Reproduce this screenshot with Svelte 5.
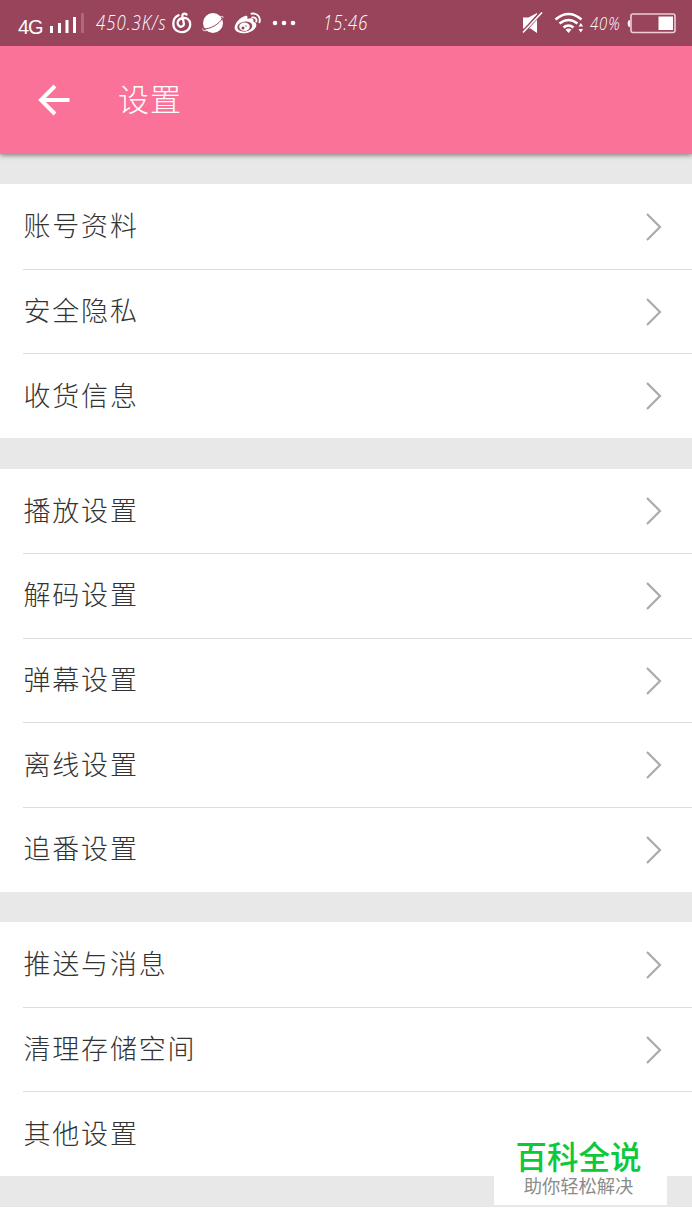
<script>
  const groups = [
    ['账号资料', '安全隐私', '收货信息'],
    ['播放设置', '解码设置', '弹幕设置', '离线设置', '追番设置'],
    ['推送与消息', '清理存储空间', '其他设置']
  ];
</script>

<div class="screen">
  <div class="status">
    <span class="net">4G</span>
    <svg class="signal" width="35" height="24" viewBox="0 0 35 24" fill="#fff">
      <path d="M1 15h3v7H1zM9 12h3v10H9zM16.500 9h3v13h-3zM24 6h3v16h-3z" />
      <path d="M32 2h3v20h-3z" opacity=".2" />
    </svg>
    <span class="hand speed">450.3K/s</span>
    <svg class="music" width="20" height="22" viewBox="0 0 20 22" fill="none" stroke="#fff" stroke-width="2.300" stroke-linecap="round">
      <path d="M6.500 3.300C-.5 6.500-.3 17 6.500 19.500c5.500 2.200 11.500-1.300 11.700-7 .2-5-4-7-7.500-6.500-4.800.7-6 5-4.300 7.300 2 2.700 6 1.200 5.400-2L10.400 4.500c-.5-3 2.200-3.500 4.100-2" />
    </svg>
    <svg class="planet" width="22" height="22" viewBox="0 0 22 22">
      <circle cx="11" cy="11" r="10" fill="#fff" />
      <path d="M1.500 16.800C8 17.500 17.500 12 20.500 6" fill="none" stroke="#98445b" stroke-width="1" />
      <path d="M.8 16.500C.3 19 2.500 19 5 18.500M18 5c2.500-1.200 3.500-.5 3 1" fill="none" stroke="#fff" stroke-width=".8" />
    </svg>
    <svg class="weibo" width="28" height="23" viewBox="0 0 28 23">
      <path d="M11 4c2-.8 3 .5 2.300 3 4-1.700 7-.7 6 2.500 3 1 3.800 3.300 2.300 6C18 22 4 23.500 1 17.500-1 13 5.500 5.500 11 4Z" fill="#fff" />
      <ellipse cx="10.800" cy="14.600" rx="7.500" ry="5" transform="rotate(-8 10.800 14.600)" fill="#98445b" />
      <ellipse cx="10.500" cy="14.800" rx="5.300" ry="4.200" fill="#fff" />
      <circle cx="9" cy="16" r="1.500" fill="#98445b" /><circle cx="12" cy="14" r=".7" fill="#98445b" />
      <path d="M17.500 1.800c5.500-1.200 9.500 3 8 8.500M18.300 5.500c3-.5 4.700 1.500 4 4" fill="none" stroke="#fff" stroke-width="1.900" stroke-linecap="round" />
    </svg>
    <svg class="dots" width="24" height="6" viewBox="0 0 24 6" fill="#fff"><circle cx="3" cy="3" r="2.300" /><circle cx="12" cy="3" r="2.300" /><circle cx="21" cy="3" r="2.300" /></svg>
    <span class="hand time">15:46</span>
    <svg class="mute" width="21" height="22" viewBox="0 0 21 22">
      <path d="M1 5.500h5.500L15 1v20l-6.500-4.500H1z" fill="#fff" />
      <path d="M0 21.500 19.500 0" stroke="#98445b" stroke-width="3.600" />
      <path d="M1 20.500 20 .5" stroke="#fff" stroke-width="1.600" />
    </svg>
    <svg class="wifi" width="30" height="22" viewBox="0 0 30 22">
      <path d="M1.500 7.500Q14.500-3.500 27.500 7.500M5.500 11.500q9-7 18 0M9.500 15.500q5-4 10 0" fill="none" stroke="#fff" stroke-width="2.600" />
      <path d="m11.500 17.500q3-2 6 0L14.500 21zM24.500 14.500l2.300-3.500 2.300 3.500zM24.500 17h4.600l-2.300 3.500z" fill="#fff" />
    </svg>
    <span class="hand percent">40%</span>
    <svg class="battery" width="50" height="21" viewBox="0 0 50 21">
      <path d="M3 7Q.7 7 .7 10.500T3 14" fill="#fff" />
      <rect x="4" y="1" width="44" height="18.500" rx="2" fill="none" stroke="#f0ccd6" stroke-width="1.600" />
      <path d="M31.500 3.500H46V17H31.500z" fill="#fff" />
    </svg>
  </div>
  <header>
    <svg width="32" height="32" viewBox="0 0 32 32" fill="none" stroke="#fff" stroke-width="4"><path d="M17 2 3 16l14 14M3 16h28.500" /></svg>
    <h1>设置</h1>
  </header>
  <main>
    {#each groups as group}
      <section>
        {#each group as label, i}
          <div class="row">
            <div class="inner" class:line={i > 0}>
              <span class="label">{label}</span>
              {#if label !== '其他设置'}
                <svg width="18" height="30" viewBox="0 0 18 30" fill="none" stroke="#aaa" stroke-width="2.200"><path d="m2 2 13 13L2 28" /></svg>
              {/if}
            </div>
          </div>
        {/each}
      </section>
    {/each}
  </main>
  <aside>
    <strong>百科全说</strong>
    <span>助你轻松解决</span>
  </aside>
</div>

<style>
  :global(body) { background: #fff; }
  .screen {
    position: relative;
    width: 692px;
    height: 1230px;
    overflow: hidden;
    background: #fff;
    font-family: "Noto Sans CJK SC", sans-serif;
  }
  svg { display: block; flex: none; }
  .status {
    position: relative;
    z-index: 1;
    display: flex;
    align-items: center;
    box-sizing: border-box;
    height: 46px;
    padding-left: 18px;
    color: #fff;
    background: #98445b;
    white-space: nowrap;
  }
  .net { width: 26px; margin-top: 7px; font: 20px/24px "Liberation Sans", sans-serif; letter-spacing: -1px; }
  .signal { margin: 0 0 0 5px; }
  .hand { flex: none; font: italic 300 20px/24px "Open Sans", sans-serif; letter-spacing: 1.200px; transform-origin: left center; }
  .speed { width: 72px; margin-left: 12px; transform: scaleX(.84); }
  .music { margin-left: 4px; }
  .planet { margin-left: 10px; }
  .weibo { margin-left: 10px; }
  .dots { margin-left: 10px; }
  .time { width: 48px; margin-left: 27px; transform: scaleX(.83); }
  .mute { margin-left: 151px; }
  .wifi { margin-left: 11px; }
  .percent { width: 32px; margin-left: 6px; font-size: 19px; transform: scaleX(.78); }
  .battery { margin-left: 5px; }
  header {
    position: relative;
    display: flex;
    align-items: center;
    box-sizing: border-box;
    height: 107.500px;
    padding-left: 38px;
    background: #fb7299;
    box-shadow: 0 1px 5px rgba(0, 0, 0, .5);
  }
  h1 { margin: -3px 0 0 48px; color: #fff; font-size: 31px; font-weight: 300; line-height: 46px; letter-spacing: 1px; }
  main {
    display: flex;
    flex-direction: column;
    gap: 30.700px;
    padding: 30.700px 0;
    background: #e8e8e8;
  }
  section { background: #fff; }
  .row { height: 84.580px; padding-left: 23px; }
  .inner {
    display: flex;
    align-items: center;
    justify-content: space-between;
    box-sizing: border-box;
    height: 100%;
    padding-right: 29px;
    border-top: 1px solid transparent;
  }
  .line { border-color: #dedede; }
  .label { margin-top: -3px; padding-left: .5px; color: #333; font-size: 27px; font-weight: 300; line-height: 38px; letter-spacing: 1.800px; }
  aside {
    position: absolute;
    left: 494px;
    top: 1121px;
    width: 173px;
    height: 84px;
    display: flex;
    flex-direction: column;
    align-items: center;
    box-sizing: border-box;
    padding: 16px 4px 0 0;
    background: #fff;
  }
  strong { color: #0dc83a; font-size: 31.500px; font-weight: 500; line-height: 36px; }
  aside span { margin-top: 1px; color: #8b8b8b; font-size: 18.300px; line-height: 22px; white-space: nowrap; }
</style>
